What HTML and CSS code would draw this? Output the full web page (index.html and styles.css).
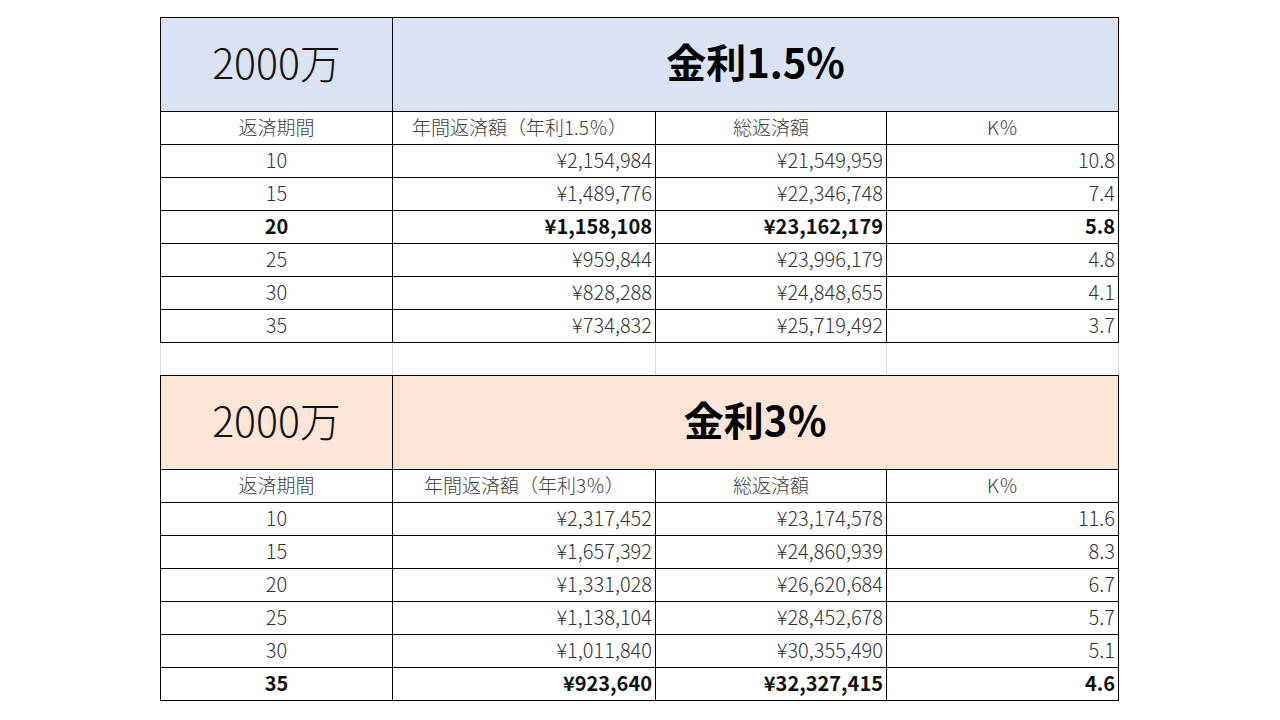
FILE: index.html
```html
<!DOCTYPE html>
<html lang="ja">
<head>
<meta charset="utf-8">
<link rel="stylesheet" href="styles.css">
</head>
<body>
<table class="sheet">
  <colgroup>
    <col class="c1"><col class="c2"><col class="c3"><col class="c4">
  </colgroup>
  <tbody>
    <tr class="head blue">
      <td class="amount">2000万</td>
      <td class="rate" colspan="3">金利1.5%</td>
    </tr>
    <tr class="labels">
      <td>返済期間</td><td class="l2">年間返済額（年利1.5％）</td><td>総返済額</td><td>K％</td>
    </tr>
    <tr><td>10</td><td class="num">¥2,154,984</td><td class="num">¥21,549,959</td><td class="num">10.8</td></tr>
    <tr><td>15</td><td class="num">¥1,489,776</td><td class="num">¥22,346,748</td><td class="num">7.4</td></tr>
    <tr class="bold"><td>20</td><td class="num">¥1,158,108</td><td class="num">¥23,162,179</td><td class="num">5.8</td></tr>
    <tr><td>25</td><td class="num">¥959,844</td><td class="num">¥23,996,179</td><td class="num">4.8</td></tr>
    <tr><td>30</td><td class="num">¥828,288</td><td class="num">¥24,848,655</td><td class="num">4.1</td></tr>
    <tr><td>35</td><td class="num">¥734,832</td><td class="num">¥25,719,492</td><td class="num">3.7</td></tr>
    <tr class="gap"><td></td><td></td><td></td><td></td></tr>
    <tr class="head peach">
      <td class="amount">2000万</td>
      <td class="rate" colspan="3">金利3％</td>
    </tr>
    <tr class="labels">
      <td>返済期間</td><td>年間返済額（年利3％）</td><td>総返済額</td><td>K％</td>
    </tr>
    <tr><td>10</td><td class="num">¥2,317,452</td><td class="num">¥23,174,578</td><td class="num">11.6</td></tr>
    <tr><td>15</td><td class="num">¥1,657,392</td><td class="num">¥24,860,939</td><td class="num">8.3</td></tr>
    <tr><td>20</td><td class="num">¥1,331,028</td><td class="num">¥26,620,684</td><td class="num">6.7</td></tr>
    <tr><td>25</td><td class="num">¥1,138,104</td><td class="num">¥28,452,678</td><td class="num">5.7</td></tr>
    <tr><td>30</td><td class="num">¥1,011,840</td><td class="num">¥30,355,490</td><td class="num">5.1</td></tr>
    <tr class="bold"><td>35</td><td class="num">¥923,640</td><td class="num">¥32,327,415</td><td class="num">4.6</td></tr>
  </tbody>
</table>
</body>
</html>
```

FILE: styles.css
```css
html, body {
  margin: 0;
  padding: 0;
  background: #ffffff;
}

body {
  padding: 17px 0 0 160px;
  font-family: "Noto Sans CJK JP", "Noto Sans", sans-serif;
  color: #333333;
}

.sheet {
  border-collapse: collapse;
  table-layout: fixed;
  width: 959px;
}

.c1 { width: 232px; }
.c2 { width: 263px; }
.c3 { width: 231px; }
.c4 { width: 232px; }

.sheet td {
  border: 1px solid #000000;
  padding: 0 3px 2px;
  height: 33px;
  box-sizing: border-box;
  font-size: 20px;
  font-weight: 300;
  line-height: 20px;
  text-align: center;
  vertical-align: middle;
  white-space: nowrap;
  overflow: hidden;
}

.sheet td.num {
  text-align: right;
}

.sheet .head td {
  height: 94px;
  padding-bottom: 8px;
}

.blue td { background: #dae3f3; }
.peach td { background: #fbe5d6; }

.sheet td.amount {
  font-size: 41px;
  line-height: 44px;
  color: #111111;
  font-weight: 300;
}

.sheet td.rate {
  font-size: 40px;
  line-height: 44px;
  font-weight: 700;
  color: #000000;
}

.labels td {
  color: #404040;
  font-size: 19px;
}

.sheet .labels td.l2 {
  padding-right: 12px;
}

.sheet .bold td {
  font-weight: 700;
  color: #111111;
}

.sheet .gap td {
  border-top-color: #000000;
  border-left: 1px solid #d9d9d9;
  border-right: 1px solid #d9d9d9;
}
```
